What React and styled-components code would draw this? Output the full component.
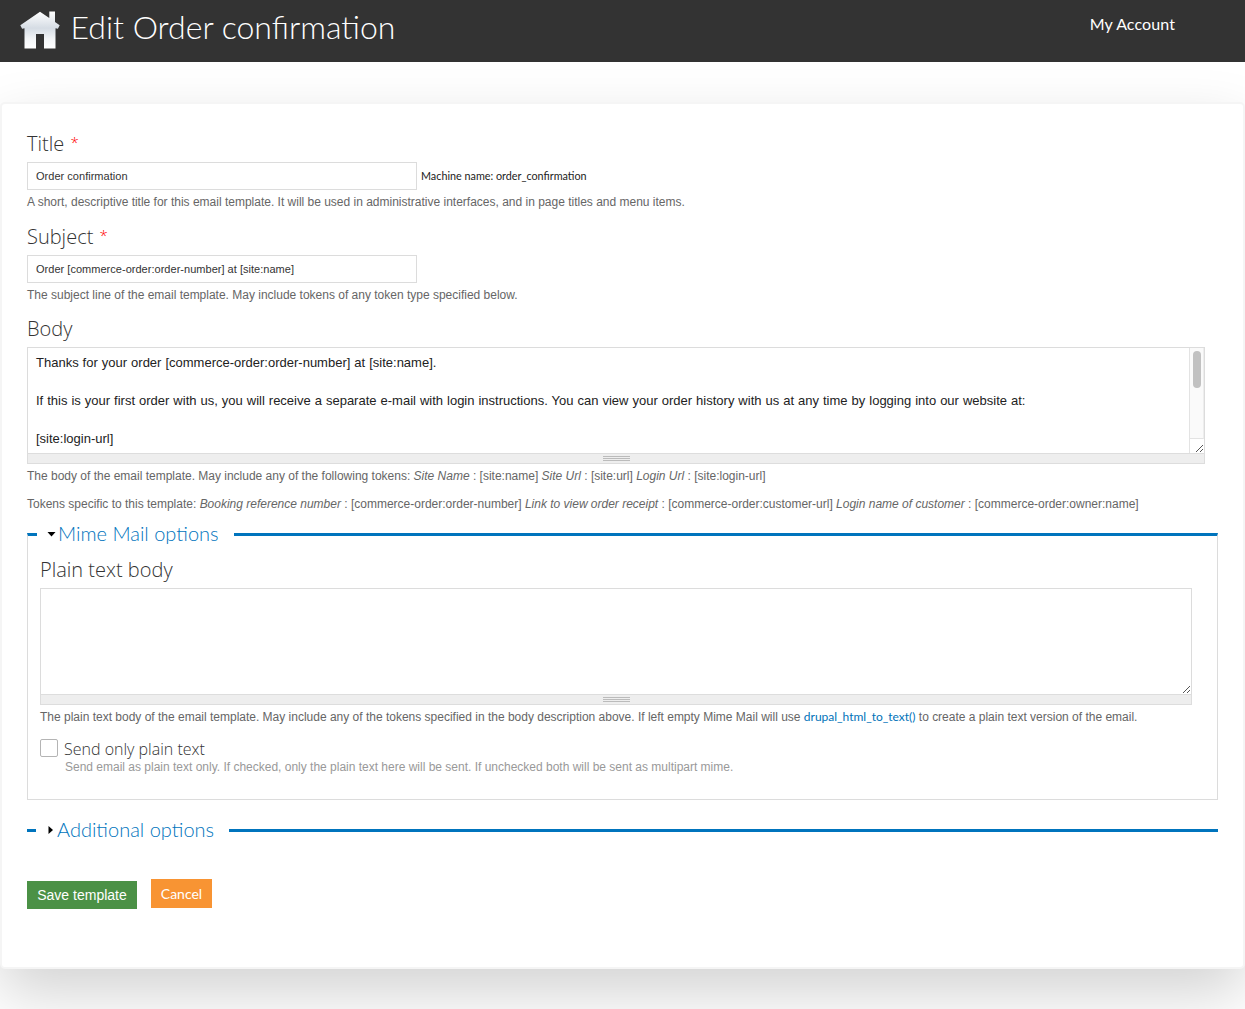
import React from "react";
import styled, { createGlobalStyle } from "styled-components";

const sans = '"Liberation Sans", Arial, sans-serif';
const lato = 'Lato, "Liberation Sans", sans-serif';
const open = '"Open Sans", "Liberation Sans", sans-serif';

const Global = createGlobalStyle`
  * { box-sizing: border-box; }
  body { margin: 0; background: #fff; font-family: ${sans}; color: #333; }
`;
const Page = styled.div`
  height: 1009px;
  overflow: hidden;
  display: flex;
  flex-direction: column;
`;
const Header = styled.header`
  height: 62px;
  flex: none;
  background: #333;
  color: #fff;
  display: flex;
  justify-content: space-between;
  padding: 0 70px 0 20px;
  position: relative;
  z-index: 1;
`;
const Brand = styled.div`
  display: flex;
  gap: 10.5px;
`;
const Home = styled.svg`
  margin-top: 11px;
  width: 40px;
  height: 38px;
`;
const PageTitle = styled.h1`
  margin: 0;
  font: 300 32px/54px ${lato};
`;
const Account = styled.a`
  font: 400 16px/48px ${lato};
  letter-spacing: 0.1px;
`;
const Panel = styled.main`
  flex: none;
  height: 867px;
  margin-top: 40px;
  padding: 28px 25px 0;
  border: 2px solid #f5f5f5;
  border-radius: 5px;
  background: #fff;
  box-shadow: 0 25px 60px rgba(0, 0, 0, 0.175);
`;
const Label = styled.label`
  display: block;
  height: 30px;
  font: 300 20px/24px ${open};
  color: #333;
`;
const Star = styled.span`
  color: #f00;
  margin-left: 1px;
  font-size: 15px;
  line-height: 1;
  vertical-align: 3px;
`;
const InputRow = styled.div`
  display: flex;
  align-items: center;
  gap: 4px;
  height: 28px;
`;
const Input = styled.input`
  width: 390px;
  height: 28px;
  padding: 0 8px;
  border: 1px solid #dcdcdc;
  background: #fff;
  color: #333;
  outline: 0;
  font: 11px ${sans};
  letter-spacing: 0.025px;
`;
const Machine = styled.span`
  font: 400 10.8px/28px ${lato};
  color: #222;
`;
const Help = styled.div`
  height: ${(p) => p.$h}px;
  font: 12px/24px ${sans};
  color: ${(p) => p.$color || "#666"};
  letter-spacing: -0.004px;
  white-space: nowrap;
`;
const Link = styled.a`
  font: 400 12px/20px ${lato};
  color: #0072b9;
`;
const AreaBox = styled.div`
  position: relative;
  width: ${(p) => p.$w}px;
`;
const Area = styled.textarea`
  display: block;
  width: 100%;
  height: 106px;
  padding: 5px 8px;
  border: 1px solid #dcdcdc;
  border-bottom: 0;
  background: #fff;
  color: #222;
  resize: none;
  overflow: hidden;
  outline: 0;
  font: 13px/19px ${sans};
  word-spacing: 0.38px;
`;
const Grippie = styled.div`
  height: 11px;
  border: 1px solid #ddd;
  background: #eee;
  display: flex;
  justify-content: center;
  align-items: center;
`;
const Grip = styled.div`
  width: 27px;
  height: 5px;
  background: repeating-linear-gradient(#bbb 0 1px, #eee 1px 2px);
`;
const Track = styled.div`
  position: absolute;
  top: 1px;
  right: 1px;
  width: 15px;
  height: 91px;
  padding: 3px 0 0 3px;
  border-left: 1px solid #e3e3e3;
  border-bottom: 1px solid #e3e3e3;
  border-right: 1px solid #ededed;
  background: #fafafa;
`;
const Thumb = styled.div`
  width: 8px;
  height: 37px;
  border-radius: 4px;
  background: #c1c1c1;
`;
const CornerLine = styled.div`
  position: absolute;
  right: 15px;
  top: 91px;
  width: 1px;
  height: 15px;
  background: #e3e3e3;
`;
const Corner = styled.svg`
  position: absolute;
  right: 1px;
  top: 97px;
  width: 8px;
  height: 8px;
`;
const Fieldset = styled.fieldset`
  min-width: 0;
  margin: ${(p) => p.$mt}px 0 0;
  height: ${(p) => p.$h}px;
  padding: 9px 12px 0;
  border: ${(p) => (p.$open ? "1px solid #dcdcdc" : "0")};
  border-top: 3px solid #0074bd;
`;
const Legend = styled.legend`
  display: flex;
  align-items: center;
  width: ${(p) => p.$w}px;
  height: 29px;
  margin-left: ${(p) => p.$ml}px;
  padding: 0 0 2px ${(p) => p.$pl}px;
  gap: ${(p) => p.$gap}px;
  font: 300 20px/27px ${lato};
  color: #0074bd;
  white-space: nowrap;
`;
const Arrow = styled.svg`
  flex: none;
  margin-top: ${(p) => p.$mt}px;
`;
const CheckRow = styled.div`
  display: flex;
  align-items: center;
  gap: 6px;
  height: 18px;
`;
const Check = styled.input`
  appearance: none;
  width: 18px;
  height: 18px;
  margin: 0;
  border: 1px solid #b4b4b4;
  border-radius: 2px;
  background: #fff;
`;
const CheckLabel = styled.label`
  padding-top: 2px;
  font: 300 16px/20px ${open};
`;
const Indent = styled.div`
  padding-left: 25px;
  margin-top: -2px;
`;
const Actions = styled.div`
  display: flex;
  align-items: flex-start;
  gap: 14px;
  margin-top: 25px;
`;
const Save = styled.button`
  width: 110px;
  height: 28px;
  margin-top: 2px;
  padding: 0;
  border: 0;
  background: #4b9146;
  color: #fff;
  font: 14px/28px ${sans};
`;
const Cancel = styled.a`
  width: 61px;
  height: 29px;
  background: #f89433;
  color: #fff;
  text-align: center;
  font: 400 14px/30px ${lato};
`;

const bodyText = `Thanks for your order [commerce-order:order-number] at [site:name].

If this is your first order with us, you will receive a separate e-mail with login instructions. You can view your order history with us at any time by logging into our website at:

[site:login-url]`;

const ResizeCorner = () => (
  <Corner viewBox="0 0 8 8" shapeRendering="crispEdges">
    <path d="M0 7h1v1H0zM1 6h1v1H1zM2 5h1v1H2zM3 4h1v1H3zM4 3h1v1H4zM5 2h1v1H5zM6 1h1v1H6zM4 7h1v1H4zM5 6h1v1H5zM6 5h1v1H6z" fill="#555" />
  </Corner>
);

const TextArea = ({ width, value, scroll }) => (
  <AreaBox $w={width}>
    <Area readOnly defaultValue={value} />
    {scroll && <Track><Thumb /></Track>}
    {scroll && <CornerLine />}
    <ResizeCorner />
    <Grippie><Grip /></Grippie>
  </AreaBox>
);

export default function App() {
  return (
    <Page>
      <Global />
      <Header>
        <Brand>
          <Home viewBox="0 0 40 38">
            <defs>
              <linearGradient id="roof" x1="0" y1="0" x2="0" y2="1">
                <stop offset="0" stopColor="#fff" />
                <stop offset="0.45" stopColor="#d5dce4" />
                <stop offset="0.75" stopColor="#f4f6f8" />
                <stop offset="1" stopColor="#fff" />
              </linearGradient>
            </defs>
            <path fill="url(#roof)" d="M20 .7 29.3 7V.5H35v10.4l4.7 3.3-1.8 3.6-2.4-.5V37.5H24V23H16v14.5H4.5V17.3l-2.4.5L.3 14.2Z" />
          </Home>
          <PageTitle>Edit Order confirmation</PageTitle>
        </Brand>
        <Account>My Account</Account>
      </Header>
      <Panel>
        <Label>Title <Star>*</Star></Label>
        <InputRow>
          <Input readOnly defaultValue="Order confirmation" />
          <Machine>Machine name: order_confirmation</Machine>
        </InputRow>
        <Help $h={35}>A short, descriptive title for this email template. It will be used in administrative interfaces, and in page titles and menu items.</Help>
        <Label>Subject <Star>*</Star></Label>
        <InputRow>
          <Input readOnly defaultValue="Order [commerce-order:order-number] at [site:name]" />
        </InputRow>
        <Help $h={34}>The subject line of the email template. May include tokens of any token type specified below.</Help>
        <Label>Body</Label>
        <TextArea width={1178} value={bodyText} scroll />
        <Help $h={28}>The body of the email template. May include any of the following tokens: <em>Site Name</em> : [site:name] <em>Site Url</em> : [site:url] <em>Login Url</em> : [site:login-url]</Help>
        <Help $h={28}>Tokens specific to this template: <em>Booking reference number</em> : [commerce-order:order-number] <em>Link to view order receipt</em> : [commerce-order:customer-url] <em>Login name of customer</em> : [commerce-order:owner:name]</Help>
        <Fieldset $mt={0} $h={280} $open>
          <Legend $w={197} $ml={-3} $pl={10} $gap={2}>
            <Arrow $mt={1} width="9" height="5" viewBox="0 0 9 5"><path d="M0.5 0h8L4.5 4.5Z" fill="#000" /></Arrow>
            Mime Mail options
          </Legend>
          <Label>Plain text body</Label>
          <TextArea width={1152} value="" />
          <Help $h={34}>The plain text body of the email template. May include any of the tokens specified in the body description above. If left empty Mime Mail will use <Link>drupal_html_to_text()</Link> to create a plain text version of the email.</Help>
          <CheckRow>
            <Check type="checkbox" />
            <CheckLabel>Send only plain text</CheckLabel>
          </CheckRow>
          <Indent><Help $h={24} $color="#999">Send email as plain text only. If checked, only the plain text here will be sent. If unchecked both will be sent as multipart mime.</Help></Indent>
        </Fieldset>
        <Fieldset $mt={16} $h={29}>
          <Legend $w={193} $ml={-3} $pl={12} $gap={4}>
            <Arrow $mt={1} width="5" height="8" viewBox="0 0 5 8"><path d="M0.5 0v8L5 4Z" fill="#000" /></Arrow>
            Additional options
          </Legend>
        </Fieldset>
        <Actions>
          <Save>Save template</Save>
          <Cancel>Cancel</Cancel>
        </Actions>
      </Panel>
    </Page>
  );
}
